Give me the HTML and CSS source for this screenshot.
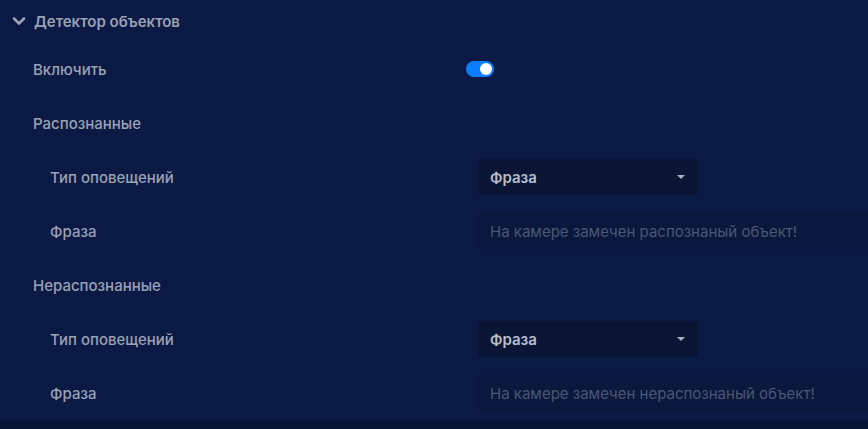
FILE: index.html
```html
<!DOCTYPE html>
<html lang="ru">
<head>
<meta charset="utf-8">
<link rel="stylesheet" href="styles.css">
</head>
<body>
<div class="panel">
  <div class="header">
    <svg class="chev" width="14" height="10" viewBox="0 0 14 10"><path d="M2 2.5 L7 7.5 L12 2.5" fill="none" stroke="#9aa1b4" stroke-width="2.6" stroke-linecap="round" stroke-linejoin="round"/></svg>
    <span>Детектор объектов</span>
  </div>
  <div class="row">
    <div class="label">Включить</div>
    <div class="ctrl"><div class="toggle"><div class="knob"></div></div></div>
  </div>
  <div class="row">
    <div class="label">Распознанные</div>
  </div>
  <div class="row sub">
    <div class="label">Тип оповещений</div>
    <div class="ctrl"><div class="select"><span>Фраза</span><span class="caret"></span></div></div>
  </div>
  <div class="row sub">
    <div class="label">Фраза</div>
    <div class="ctrl"><input class="input" placeholder="На камере замечен распознаный объект!"></div>
  </div>
  <div class="row">
    <div class="label">Нераспознанные</div>
  </div>
  <div class="row sub">
    <div class="label">Тип оповещений</div>
    <div class="ctrl"><div class="select"><span>Фраза</span><span class="caret"></span></div></div>
  </div>
  <div class="row sub">
    <div class="label">Фраза</div>
    <div class="ctrl"><input class="input" placeholder="На камере замечен нераспознаный объект!"></div>
  </div>
</div>
<div class="footer"></div>
</body>
</html>
```
FILE: styles.css
```css
html, body {
  margin: 0;
  padding: 0;
  background: #081535;
  font-family: "Inter", "Noto Sans", sans-serif;
  overflow: hidden;
}
.panel {
  background: #0b1a45;
}
.header {
  height: 42px;
  display: flex;
  align-items: center;
  padding-left: 12px;
  gap: 8px;
  color: #9aa1b4;
  font-size: 15px;
  font-weight: 600;
}
.chev { display: block; }
.row {
  height: 54px;
  display: flex;
  align-items: center;
  padding-left: 33px;
}
.row.sub { padding-left: 50px; }
.label {
  color: #9aa1b4;
  font-size: 15px;
  font-weight: 500;
  width: 433px;
  flex: none;
}
.row.sub .label { width: 428px; }
.ctrl { flex: 1; display: flex; align-items: center; }
.toggle {
  width: 28px;
  height: 16px;
  border-radius: 8px;
  background: #0a7cff;
  position: relative;
}
.knob {
  position: absolute;
  right: 2px;
  top: 2px;
  width: 12px;
  height: 12px;
  border-radius: 50%;
  background: #fff;
}
.select {
  width: 220px;
  height: 36px;
  box-sizing: border-box;
  border-radius: 4px;
  background: #0a1535;
  display: flex;
  align-items: center;
  justify-content: space-between;
  padding: 0 12px;
  color: #b9bdca;
  font-size: 15px;
  font-weight: 600;
}
.caret {
  width: 0;
  height: 0;
  border-left: 4px solid transparent;
  border-right: 4px solid transparent;
  border-top: 4px solid #aab0c0;
  margin-right: 1px;
}
.input {
  flex: 1;
  height: 36px;
  box-sizing: border-box;
  border: none;
  outline: none;
  border-radius: 4px 0 0 4px;
  background: #0a183d;
  padding: 0 12px;
  font-family: inherit;
  font-size: 15px;
  color: #c5c9d4;
}
.input::placeholder { color: #4b5675; }
.footer { height: 20px; background: #081535; }
```
